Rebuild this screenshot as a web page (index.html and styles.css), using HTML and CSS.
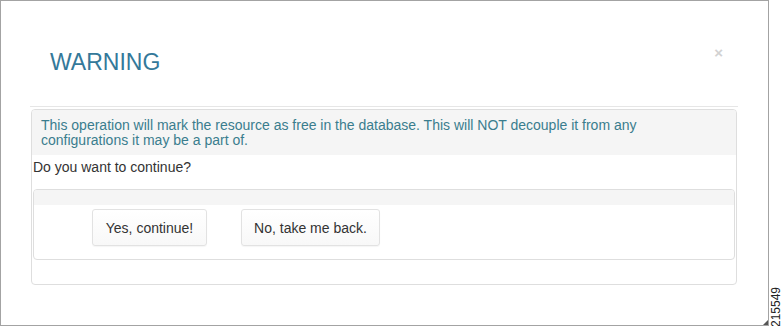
FILE: index.html
```html
<!DOCTYPE html>
<html>
<head>
<meta charset="utf-8">
<link rel="stylesheet" href="styles.css">
</head>
<body>
<div class="frame">
  <div class="modal">
    <div class="modal-header">
      <h3 class="title">WARNING</h3>
      <span class="close">×</span>
    </div>
    <div class="modal-body">
      <div class="panel">
        <div class="panel-heading">This operation will mark the resource as free in the database. This will NOT decouple it from any configurations it may be a part of.</div>
        <p class="question">Do you want to continue?</p>
        <div class="inner-panel">
          <div class="inner-heading"></div>
          <div class="inner-body">
            <button class="btn btn-yes">Yes, continue!</button>
            <button class="btn btn-no">No, take me back.</button>
          </div>
        </div>
      </div>
    </div>
  </div>
  <svg class="grip" width="5" height="5" viewBox="0 0 5 5"><polygon points="5,0 5,5 0,5" fill="#555"/></svg>
</div>
<div class="side"><span class="fig">215549</span></div>
</body>
</html>
```

FILE: styles.css
```css
html, body {
  margin: 0;
  padding: 0;
  background: #fff;
}
body {
  width: 782px;
  height: 326px;
  display: flex;
  font-family: "Liberation Sans", Arial, sans-serif;
  font-size: 14px;
  color: #333;
  overflow: hidden;
}
.frame {
  position: relative;
  width: 769px;
  height: 326px;
  box-sizing: border-box;
  border: 1px solid #a3a3a3;
  flex: none;
}
.modal {
  margin: 0 30px 0 29px;
}
.modal-header {
  height: 106px;
  box-sizing: border-box;
  border-bottom: 1px solid #e6e6e6;
  display: flex;
  justify-content: space-between;
  align-items: flex-start;
  padding: 48px 15px 0 20px;
}
.title {
  margin: 0;
  font-size: 23px;
  line-height: 26px;
  font-weight: normal;
  color: #34799a;
}
.close {
  font-size: 15px;
  font-weight: bold;
  line-height: 15px;
  color: #d2d2d2;
  margin-top: -4px;
}
.modal-body {
  padding-top: 2px;
}
.panel {
  margin: 0 1px;
  border: 1px solid #dedede;
  border-radius: 4px;
  padding-bottom: 24px;
}
.panel-heading {
  background: #f5f5f5;
  color: #3a7d8e;
  line-height: 15px;
  padding: 8px 9px 7px 9px;
  border-radius: 3px 3px 0 0;
}
.question {
  margin: 0;
  padding: 2px 0 0 1px;
  line-height: 20px;
  color: #333;
}
.inner-panel {
  margin: 12px 1px 0 1px;
  border: 1px solid #dedede;
  border-radius: 4px;
}
.inner-heading {
  height: 15px;
  background: #f5f5f5;
  border-radius: 3px 3px 0 0;
}
.inner-body {
  display: flex;
  gap: 34px;
  padding: 4px 0 13px 58px;
}
.btn {
  height: 37px;
  box-sizing: border-box;
  border: 1px solid #e2e2e2;
  border-radius: 3px;
  background: linear-gradient(#ffffff, #f8f8f8);
  box-shadow: 0 1px 1px rgba(0, 0, 0, 0.04);
  font-family: "Liberation Sans", Arial, sans-serif;
  font-size: 14px;
  color: #333;
  padding: 0;
  text-align: center;
}
.btn-yes {
  width: 115px;
}
.btn-no {
  width: 139px;
}
.grip {
  position: absolute;
  right: 0;
  bottom: 0;
}
.side {
  flex: 1;
  display: flex;
  align-items: flex-end;
  justify-content: center;
}
.fig {
  writing-mode: vertical-rl;
  transform: rotate(180deg);
  font-size: 12px;
  line-height: 12px;
  color: #222;
  margin-bottom: -1px;
}
```
